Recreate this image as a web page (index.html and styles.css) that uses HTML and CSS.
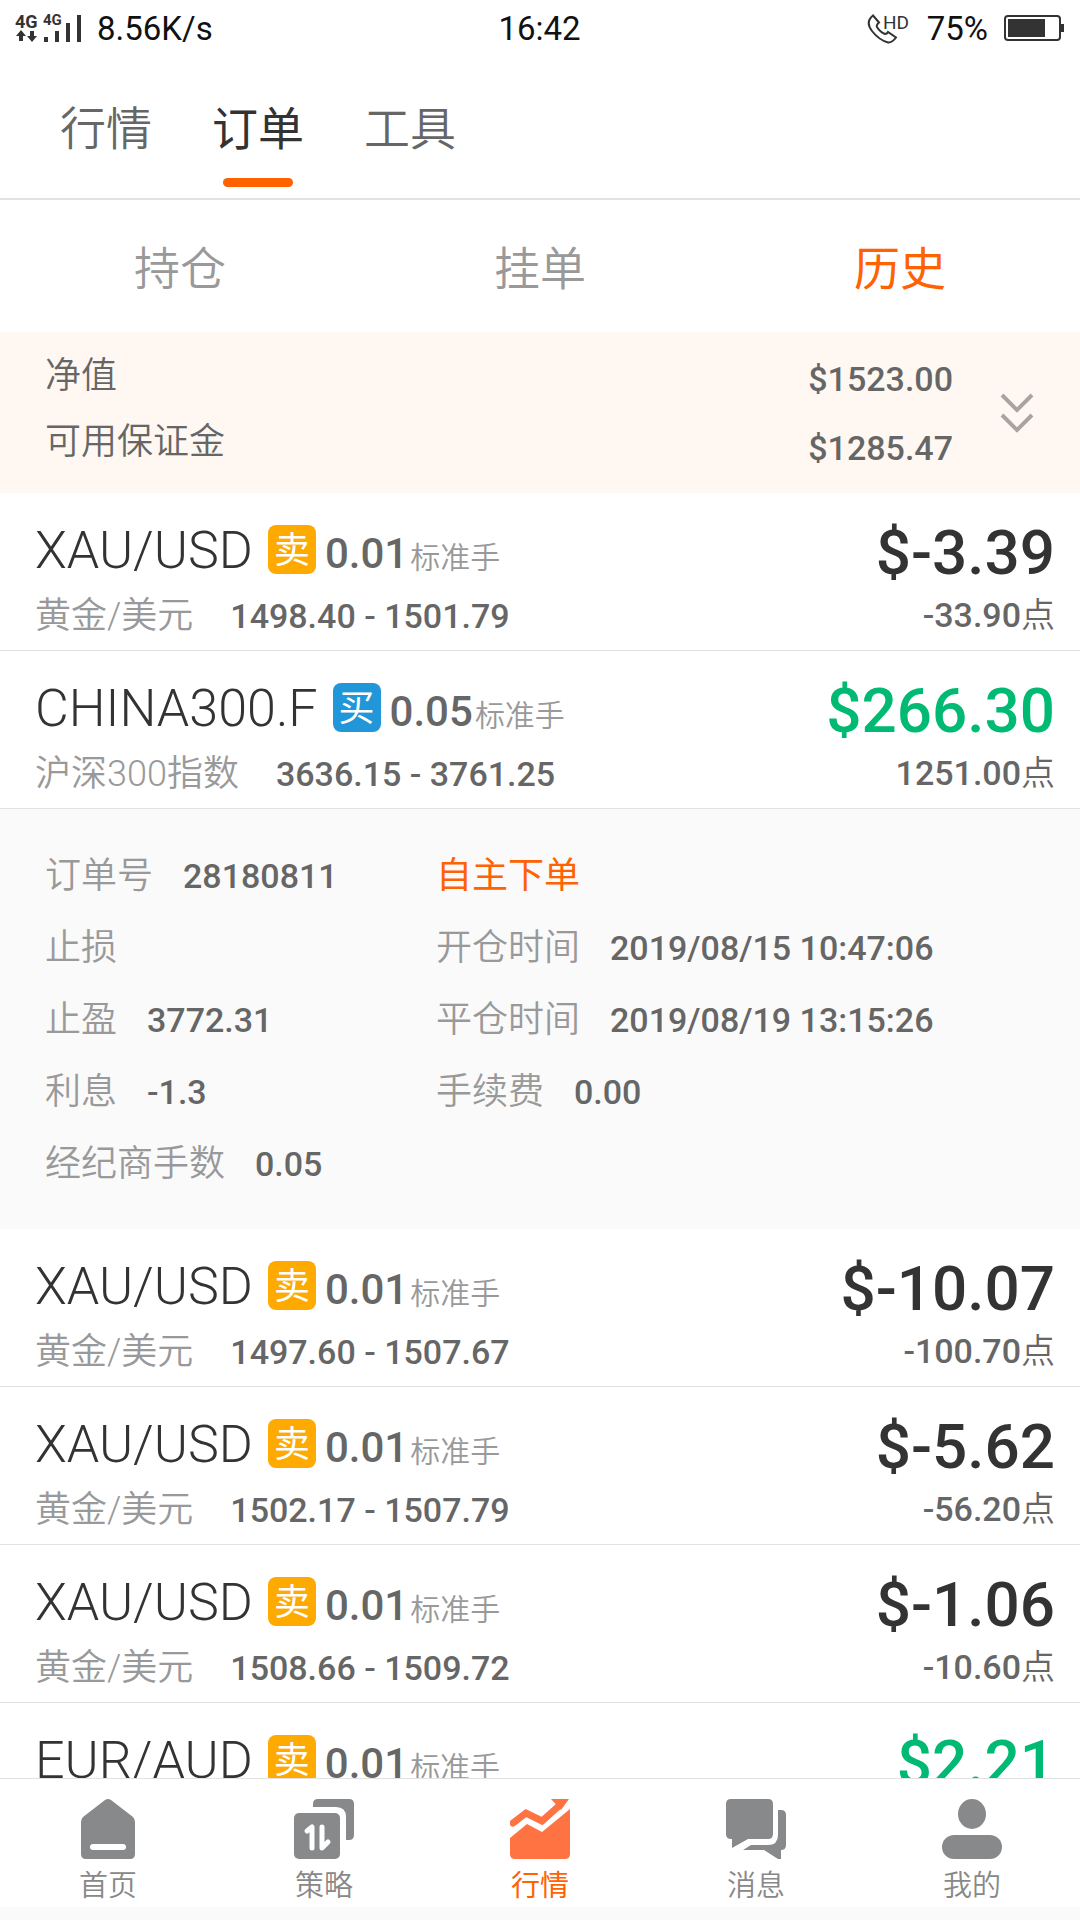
FILE: index.html
```
<!DOCTYPE html>
<html lang="zh-CN">
<head>
    <meta charset="UTF-8">
    <meta name="viewport" content="width=device-width, initial-scale=1.0">
    <title>订单</title>
    <link rel="stylesheet" href="styles.css">
</head>
<body>
    <div class="status-bar">
        <div class="status-left">
            <svg class="signal" width="68" height="40" viewBox="0 -6 68 40">
                <text x="0" y="14" font-size="18" font-weight="700">4G</text>
                <text x="28" y="11" font-size="15" font-weight="700">4G</text>
                <path d="M6 16l5 6H8v5H4v-5H1zM17 28l-5-6h3v-5h4v5h3z"/>
                <path d="M29 23h4v5h-4zM40 17h4v11h-4zM51 9h4v19h-4zM62 1h4v27h-4z"/>
            </svg>
            <span>8.56K/s</span>
        </div>
        <div class="status-time">16:42</div>
        <div class="status-right">
            <svg class="call" width="44" height="40" viewBox="0 -6 44 40">
                <path class="handset" d="M6 1.500L12 8.500Q9 11 10 13Q13 18 18 20Q20 20 21 18L29 23.500Q25 29 21 28.500Q12 26 5 17Q-2 8 6 1.500Z"/>
                <text x="16" y="15" font-size="19">HD</text>
            </svg>
            <span>75%</span>
            <svg width="60" height="26" viewBox="0 0 60 26">
                <rect class="battery-case" x="1" y="1" width="55" height="24" rx="3"/>
                <path d="M4 4h37v18H4zM57 9h3v8h-3z"/>
            </svg>
        </div>
    </div>

    <nav class="main-tabs">
        <a href="#">行情</a>
        <a href="#" class="active">订单</a>
        <a href="#">工具</a>
    </nav>

    <nav class="sub-tabs">
        <a href="#">持仓</a>
        <a href="#">挂单</a>
        <a href="#" class="active">历史</a>
    </nav>

    <section class="summary">
        <div class="summary-labels">
            <div>净值</div>
            <div>可用保证金</div>
        </div>
        <div class="summary-values">
            <div>$1523.00</div>
            <div>$1285.47</div>
        </div>
        <button type="button" class="expand" aria-label="展开">
            <svg width="34" height="40" viewBox="0 0 34 40">
                <path d="M2 2l15 15L32 2M2 22l15 15L32 22"/>
            </svg>
        </button>
    </section>

    <main class="orders">
        <article class="order">
            <div class="order-info">
                <div class="order-title">
                    <h2>XAU/USD</h2><span class="badge sell">卖</span><b>0.01</b><small>标准手</small>
                </div>
                <div class="order-sub"><span>黄金/美元</span><b>1498.40 - 1501.79</b></div>
            </div>
            <div class="order-result">
                <div class="amount">$-3.39</div>
                <div class="points"><b>-33.90</b>点</div>
            </div>
        </article>

        <article class="order">
            <div class="order-info">
                <div class="order-title">
                    <h2>CHINA300.F</h2><span class="badge buy">买</span><b>0.05</b><small>标准手</small>
                </div>
                <div class="order-sub"><span>沪深300指数</span><b>3636.15 - 3761.25</b></div>
            </div>
            <div class="order-result">
                <div class="amount profit">$266.30</div>
                <div class="points"><b>1251.00</b>点</div>
            </div>
        </article>

        <section class="details">
            <dl>
                <div><dt>订单号</dt><dd>28180811</dd></div>
                <div><dt>止损</dt><dd></dd></div>
                <div><dt>止盈</dt><dd>3772.31</dd></div>
                <div><dt>利息</dt><dd>-1.3</dd></div>
                <div><dt>经纪商手数</dt><dd>0.05</dd></div>
            </dl>
            <dl>
                <div><dt class="own-order">自主下单</dt></div>
                <div><dt>开仓时间</dt><dd>2019/08/15 10:47:06</dd></div>
                <div><dt>平仓时间</dt><dd>2019/08/19 13:15:26</dd></div>
                <div><dt>手续费</dt><dd>0.00</dd></div>
            </dl>
        </section>

        <article class="order">
            <div class="order-info">
                <div class="order-title">
                    <h2>XAU/USD</h2><span class="badge sell">卖</span><b>0.01</b><small>标准手</small>
                </div>
                <div class="order-sub"><span>黄金/美元</span><b>1497.60 - 1507.67</b></div>
            </div>
            <div class="order-result">
                <div class="amount">$-10.07</div>
                <div class="points"><b>-100.70</b>点</div>
            </div>
        </article>

        <article class="order">
            <div class="order-info">
                <div class="order-title">
                    <h2>XAU/USD</h2><span class="badge sell">卖</span><b>0.01</b><small>标准手</small>
                </div>
                <div class="order-sub"><span>黄金/美元</span><b>1502.17 - 1507.79</b></div>
            </div>
            <div class="order-result">
                <div class="amount">$-5.62</div>
                <div class="points"><b>-56.20</b>点</div>
            </div>
        </article>

        <article class="order">
            <div class="order-info">
                <div class="order-title">
                    <h2>XAU/USD</h2><span class="badge sell">卖</span><b>0.01</b><small>标准手</small>
                </div>
                <div class="order-sub"><span>黄金/美元</span><b>1508.66 - 1509.72</b></div>
            </div>
            <div class="order-result">
                <div class="amount">$-1.06</div>
                <div class="points"><b>-10.60</b>点</div>
            </div>
        </article>

        <article class="order">
            <div class="order-info">
                <div class="order-title">
                    <h2>EUR/AUD</h2><span class="badge sell">卖</span><b>0.01</b><small>标准手</small>
                </div>
            </div>
            <div class="order-result">
                <div class="amount profit">$2.21</div>
            </div>
        </article>
    </main>

    <nav class="bottom-nav">
        <a href="#">
            <svg viewBox="0 0 60 60">
                <path fill-rule="evenodd" d="M27 1Q30-1 33 1L55 18Q57 20 57 23V55Q57 60 52 60H8Q3 60 3 55V23Q3 20 5 18ZM15 45a3 3 0 0 0 0 6H45a3 3 0 0 0 0-6Z"/>
            </svg>
            <span>首页</span>
        </a>
        <a href="#">
            <svg viewBox="0 0 60 60">
                <path d="M19 8V5Q19 0 24 0H55Q60 0 60 5V36Q60 41 55 41H52V18Q52 8 42 8Z"/>
                <rect y="14" width="46" height="46" rx="5"/>
                <path class="cut" d="M13 32l5-4v21M28 28v21l6-6"/>
            </svg>
            <span>策略</span>
        </a>
        <a href="#" class="active">
            <svg viewBox="0 0 60 60">
                <path class="trend" d="M3 24L16 14L32 22L50 6"/>
                <path d="M41 0H59L51 11Z"/>
                <path d="M0 39L17 25L32 33L60 10V55Q60 60 55 60H5Q0 60 0 55Z"/>
            </svg>
            <span>行情</span>
        </a>
        <a href="#">
            <svg viewBox="0 0 60 60">
                <path d="M5 0H42Q47 0 47 5V35Q47 40 42 40H22L6 49V40H5Q0 40 0 35V5Q0 0 5 0Z"/>
                <path d="M52 11H55Q60 11 60 16V46Q60 51 55 51V60H52L38 51H17L25 46H42Q52 46 52 36Z"/>
            </svg>
            <span>消息</span>
        </a>
        <a href="#">
            <svg viewBox="0 0 60 60">
                <ellipse cx="30" cy="15" rx="14" ry="15"/>
                <rect y="36" width="60" height="24" rx="12"/>
            </svg>
            <span>我的</span>
        </a>
    </nav>
</body>
</html>
```
FILE: styles.css
```
:root {
    --primary-color: #ff6200;
    --profit-color: #00b972;
    --sell-color: #ffaa00;
    --buy-color: #2196d9;
    --text-dark: #333;
    --text-color: #666;
    --text-light: #999;
    --border-color: #e2e2e2;
}

* {
    box-sizing: border-box;
    margin: 0;
    padding: 0;
}

body {
    display: flex;
    flex-direction: column;
    height: 100vh;
    overflow: hidden;
    font-family: Roboto, 'Noto Sans CJK SC', sans-serif;
    font-weight: 350;
    color: var(--text-color);
    background-color: #fff;
}

a {
    color: inherit;
    text-decoration: none;
}

b {
    font-weight: 500;
}

/* Status bar */
.status-bar {
    display: grid;
    grid-template-columns: 1fr auto 1fr;
    align-items: center;
    height: 56px;
    padding: 0 16px 0 15px;
    font-size: 33px;
    font-weight: 400;
    color: #111;
}

.status-bar svg {
    fill: #333;
}

.status-left,
.status-right {
    display: flex;
    align-items: center;
    gap: 14px;
}

.status-right {
    gap: 16px;
    justify-content: flex-end;
}

.status-bar .handset,
.status-bar .battery-case {
    fill: none;
    stroke: #333;
    stroke-width: 2;
}

/* Tabs */
.main-tabs {
    display: flex;
    gap: 60px;
    height: 144px;
    padding: 4px 60px 0;
    border-bottom: 2px solid var(--border-color);
    font-size: 46px;
    line-height: 138px;
}

.main-tabs a {
    position: relative;
}

.main-tabs .active {
    color: var(--text-dark);
    font-weight: 400;
}

.main-tabs .active::after {
    content: '';
    position: absolute;
    left: 50%;
    bottom: 11px;
    width: 70px;
    height: 9px;
    margin-left: -35px;
    border-radius: 5px;
    background-color: var(--primary-color);
}

.sub-tabs {
    display: flex;
    padding-top: 6px;
    font-size: 46px;
    line-height: 126px;
    color: var(--text-light);
}

.sub-tabs a {
    flex: 1;
    text-align: center;
}

.sub-tabs .active {
    color: var(--primary-color);
    font-weight: 400;
}

/* Account summary */
.summary {
    display: flex;
    align-items: center;
    height: 161px;
    padding: 0 45px;
    background-color: #fff8f2;
}

.summary-labels {
    flex: 1;
    font-size: 36px;
    line-height: 66px;
    padding-bottom: 8px;
}

.summary-values {
    padding-top: 2px;
    font-size: 34px;
    font-weight: 500;
    line-height: 69px;
}

.expand {
    width: 36px;
    height: 40px;
    margin-left: 46px;
    border: none;
    background: none;
}

.expand svg {
    fill: none;
    stroke: #a8a4a0;
    stroke-width: 4;
}

/* Order list */
.orders {
    flex: 1;
    min-height: 0;
    overflow: hidden;
}

.order {
    display: flex;
    justify-content: space-between;
    height: 158px;
    padding: 28px 25px 0 35px;
    border-bottom: 1px solid var(--border-color);
}

.order-title {
    display: flex;
    align-items: baseline;
    height: 64px;
    line-height: 60px;
}

.order-title h2 {
    font-size: 52px;
    font-weight: 300;
    color: var(--text-dark);
}

.order-title b {
    font-size: 42px;
}

.order-title small {
    margin-left: 2px;
    font-size: 30px;
    color: var(--text-light);
}

.badge {
    align-self: flex-start;
    width: 48px;
    height: 49px;
    margin: 4px 9px 0 15px;
    border-radius: 8px;
    font-size: 36px;
    font-weight: 400;
    line-height: 52px;
    text-align: center;
    color: #fff;
}

.badge.sell {
    background-color: var(--sell-color);
}

.badge.buy {
    background-color: var(--buy-color);
}

.order-sub {
    display: flex;
    align-items: baseline;
    gap: 37px;
    font-size: 36px;
    line-height: 62px;
    color: var(--text-light);
}

.order-sub b {
    font-size: 34px;
    color: var(--text-color);
}

.order-result {
    text-align: right;
}

.amount {
    font-size: 62px;
    font-weight: 500;
    line-height: 64px;
    color: var(--text-dark);
}

.amount.profit {
    color: var(--profit-color);
}

.points {
    font-size: 34px;
    line-height: 60px;
}

/* Expanded order */
.details {
    display: flex;
    height: 420px;
    padding: 31px 45px;
    background-color: #fafafa;
}

.details dl {
    flex: 1;
}

.details dl:first-child {
    flex: 0 0 391px;
}

.details dl div {
    display: flex;
    align-items: baseline;
    gap: 30px;
    line-height: 72px;
}

.details dt {
    font-size: 36px;
    color: var(--text-light);
}

.details dt.own-order {
    font-weight: 400;
    color: var(--primary-color);
}

.details dd {
    font-size: 34px;
    font-weight: 500;
}

/* Bottom navigation */
.bottom-nav {
    display: flex;
    height: 142px;
    border-top: 1px solid var(--border-color);
    border-bottom: 13px solid #fafafa;
}

.bottom-nav a {
    flex: 1;
    display: flex;
    flex-direction: column;
    align-items: center;
    padding-top: 20px;
    font-size: 29px;
    line-height: 54px;
    color: #888;
}

.bottom-nav svg {
    flex-shrink: 0;
    width: 60px;
    height: 60px;
    fill: #88898b;
}

.bottom-nav .cut {
    fill: none;
    stroke: #fff;
    stroke-width: 5;
    stroke-linecap: round;
    stroke-linejoin: round;
}

.bottom-nav .trend {
    fill: none;
    stroke: #ff7342;
    stroke-width: 7;
    stroke-linecap: round;
}

.bottom-nav .active {
    color: var(--primary-color);
    font-weight: 400;
}

.bottom-nav .active svg {
    fill: #ff7342;
}
```
